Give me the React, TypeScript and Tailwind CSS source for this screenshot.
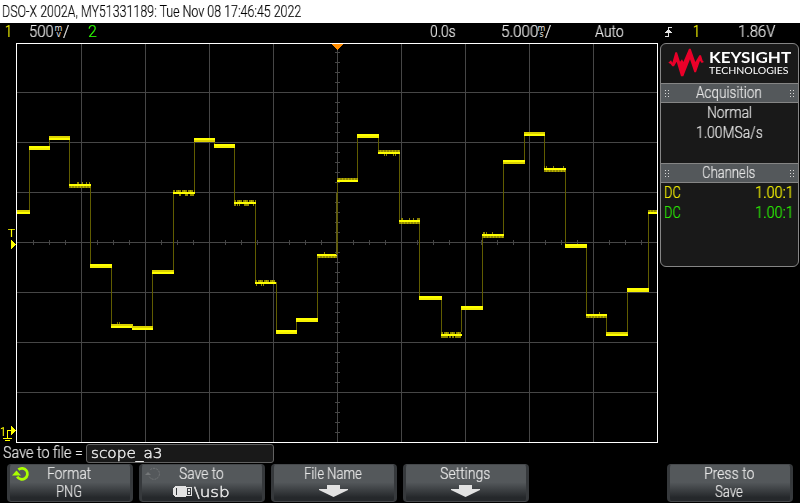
import { useLayoutEffect, useRef } from "react";
import type { ReactNode } from "react";

const SANS = "font-['Roboto','Liberation_Sans',sans-serif] font-light [-webkit-text-stroke:0.2px_currentColor]";
const WIDE = "font-['DejaVu_Sans',sans-serif] font-extralight [-webkit-text-stroke:0.45px_currentColor]";

/** Single line of text, condensed or stretched to the width of its box. */
function Fit({ className = "", face = SANS, children }: { className?: string; face?: string; children: ReactNode }) {
  const box = useRef<HTMLSpanElement>(null);
  const line = useRef<HTMLSpanElement>(null);
  useLayoutEffect(() => {
    if (box.current && line.current) {
      line.current.style.transform = `scaleX(${box.current.clientWidth / line.current.offsetWidth})`;
    }
  });
  return (
    <span ref={box} className={`block shrink-0 whitespace-nowrap ${face} ${className}`}>
      <span ref={line} className="inline-block origin-left align-top will-change-transform">{children}</span>
    </span>
  );
}

type Step = { x: number; end: number; y: number; kind: "top" | "bottom" | "full" | "up" | "down" | "both"; jitter?: number[] };

// full/top/bottom: four rows of solid trace; up/down/both: two bright rows with noise beside them
const STEPS: Step[] = [
  { x: 17, end: 30, y: 210, kind: "bottom" },
  { x: 29, end: 50, y: 146, kind: "full" },
  { x: 49, end: 70, y: 136, kind: "bottom" },
  { x: 69, end: 91, y: 184, kind: "down", jitter: [8, 9, 13, 17, 20] },
  { x: 90, end: 112, y: 264, kind: "full" },
  { x: 111, end: 133, y: 324, kind: "bottom", jitter: [6, 8] },
  { x: 132, end: 153, y: 326, kind: "bottom" },
  { x: 152, end: 174, y: 270, kind: "bottom" },
  { x: 173, end: 195, y: 192, kind: "both", jitter: [6, 7, 12, 13, 14, 17, 18, 19, 20] },
  { x: 194, end: 215, y: 138, kind: "top" },
  { x: 214, end: 235, y: 144, kind: "full" },
  { x: 234, end: 256, y: 202, kind: "both", jitter: [0, 1, 3, 5, 10, 11, 12, 13, 14, 19] },
  { x: 255, end: 276, y: 282, kind: "both", jitter: [1, 6, 8] },
  { x: 276, end: 297, y: 330, kind: "full" },
  { x: 296, end: 318, y: 318, kind: "full" },
  { x: 317, end: 337, y: 254, kind: "down", jitter: [7] },
  { x: 337, end: 358, y: 180, kind: "up" },
  { x: 357, end: 379, y: 134, kind: "full" },
  { x: 378, end: 400, y: 152, kind: "up", jitter: [6, 8, 15, 17] },
  { x: 399, end: 420, y: 220, kind: "down", jitter: [2, 3, 10, 14, 18, 19, 20] },
  { x: 419, end: 442, y: 296, kind: "full" },
  { x: 441, end: 462, y: 334, kind: "both", jitter: [0, 1, 2, 3, 4, 5, 6, 8, 9, 11, 12, 14, 15, 16, 17, 18, 19] },
  { x: 461, end: 483, y: 306, kind: "full" },
  { x: 482, end: 504, y: 234, kind: "down", jitter: [1, 2, 4, 10] },
  { x: 503, end: 525, y: 160, kind: "top" },
  { x: 524, end: 545, y: 132, kind: "bottom" },
  { x: 544, end: 566, y: 168, kind: "down", jitter: [0, 2, 9, 19] },
  { x: 565, end: 587, y: 244, kind: "full" },
  { x: 586, end: 607, y: 314, kind: "down", jitter: [13] },
  { x: 606, end: 628, y: 332, kind: "bottom" },
  { x: 627, end: 649, y: 288, kind: "full" },
  { x: 648, end: 657, y: 212, kind: "up" },
];

function Trace() {
  return (
    <g>
      {STEPS.slice(1).map((s, i) => {
        const p = STEPS[i];
        return <rect key={i} x={s.x} y={Math.min(p.y, s.y)} width={1} height={Math.abs(p.y - s.y)} fill="#605c00" />;
      })}
      {STEPS.map((s) => {
        const w = s.end - s.x;
        if (s.kind === "full" || s.kind === "top" || s.kind === "bottom") {
          return (
            <g key={s.x}>
              <rect x={s.x} y={s.y} width={w} height={4} fill={s.kind === "full" ? "#f5f000" : "#dcd200"} />
              <rect x={s.x} y={s.kind === "bottom" ? s.y + 2 : s.y} width={w} height={2} fill="#ffff00" />
              {s.jitter?.map((j) => <rect key={j} x={s.x + j} y={s.y - 2} width={1} height={2} fill="#777100" />)}
            </g>
          );
        }
        const solidAbove = s.kind !== "down";
        return (
          <g key={s.x}>
            <rect x={s.x} y={solidAbove ? s.y - 2 : s.y + 2} width={w} height={2} fill="#908900" />
            {Array.from({ length: Math.floor(w / 3) }, (_, k) => (
              <rect
                key={k}
                x={s.x + k * 3 + 2}
                y={solidAbove ? s.y - 2 : s.y + 2}
                width={1}
                height={2}
                fill={s.kind === "both" && k % 2 === 0 ? "#000" : "#b5ad00"}
              />
            ))}
            {s.jitter?.map((j) => (
              <rect key={`j${j}`} x={s.x + j} y={solidAbove ? s.y + 2 : s.y - 2} width={1} height={2} fill="#8a8300" />
            ))}
            <rect x={s.x} y={s.y} width={w} height={2} fill="#ffff00" />
          </g>
        );
      })}
    </g>
  );
}

function Plot() {
  return (
    <svg className="block h-[400px] w-[658px] shrink-0 will-change-transform" viewBox="0 43 658 400" shapeRendering="crispEdges">
      <g fill="#464646">
        {[81, 145, 209, 273, 337, 401, 465, 529, 593].map((x) => <rect key={x} x={x} y={43} width={1} height={400} />)}
        {[92, 142, 192, 242, 292, 342, 392].map((y) => <rect key={y} x={16} y={y} width={642} height={1} />)}
        {Array.from({ length: 39 }, (_, i) => <rect key={i} x={33 + i * 16} y={240} width={1} height={5} />)}
        {Array.from({ length: 39 }, (_, i) => <rect key={i} x={335} y={52 + i * 10} width={5} height={1} />)}
      </g>
      <Trace />
      <rect x={336} y={193} width={1} height={62} fill="#605c22" />
      <path d="M16 43h642v400h-642zM17 44v398h640v-398z" fill="#fff" fillRule="evenodd" />
      <path d="M332 44h11v1h-1v1h-1v1h-1v1h-1v1h-1v1h-1v-1h-1v-1h-1v-1h-1v-1h-1v-1h-1z" fill="#ff8c00" />
      <g fill="#ffff00">
        <text x={7.8} y={237} fontSize={11.5} textLength={7.5} lengthAdjust="spacingAndGlyphs" className="font-['Roboto'] font-normal">T</text>
        <path d="M11 240h1v1h1v1h1v1h1v1h1v1h-1v1h-1v1h-1v1h-1v1h-1z" />
        <text x={0} y={436} fontSize={13.5} textLength={6} lengthAdjust="spacingAndGlyphs" className="font-['Roboto'] font-normal">1</text>
        <path d="M7 430h4v-4h1v1h1v1h1v1h1v1h1v1h-1v1h-1v1h-1v1h-1v1h-1v-4h-3v7h4v1h-9v-1h4zM5 440h5v1h-5z" />
      </g>
    </svg>
  );
}

function UnitStack({ upper, lower }: { upper: string; lower: string }) {
  return (
    <span className="flex w-[7px] flex-col items-center pt-[3px] font-['DejaVu_Sans',sans-serif] text-[8px]">
      <span className="block h-[5px] leading-[5px]">{upper}</span>
      <span className="block h-[6px] leading-[7px]">{lower}</span>
    </span>
  );
}

function StatusBar() {
  return (
    <div className="flex h-5 text-[16px] leading-[18px] text-[#e8e8e8]">
      <Fit className="ml-[5px] w-[7px] text-[#ffff00]">1</Fit>
      <Fit className="ml-[17px] w-[25px]">500</Fit>
      <span className="ml-px flex"><UnitStack upper="m" lower="v" /></span>
      <Fit className="ml-px w-[6px]">/</Fit>
      <Fit className="ml-[19px] w-[9px] text-[#2dff00]">2</Fit>
      <Fit className="ml-[333px] w-[26px]">0.0s</Fit>
      <Fit className="ml-[45px] w-[37px]">5.000</Fit>
      <UnitStack upper="m" lower="s" />
      <Fit className="w-[6px]">/</Fit>
      <Fit className="ml-[44px] w-[29px]">Auto</Fit>
      <svg className="mt-[3px] ml-[40px] h-[12px] w-[9px] shrink-0" viewBox="0 0 9 12" shapeRendering="crispEdges" fill="#e2e2e2">
        <path d="M4 1h4v1h-3v2h1v1h1v1h1v1h-3v4h-4v-1h3v-3h-3v-1h1v-1h1v-1h1z" />
      </svg>
      <Fit className="ml-[20px] w-[7px] text-[#ffff00]">1</Fit>
      <Fit className="ml-[38px] w-[37px]">1.86V</Fit>
    </div>
  );
}

function Grip() {
  return (
    <span className="grid grid-cols-[1px_1px] gap-x-[2px] gap-y-[2px]">
      {[0, 1, 2, 3, 4, 5].map((i) => <span key={i} className="size-px bg-[#d8d8d8]" />)}
    </span>
  );
}

function SectionTitle({ children }: { children: ReactNode }) {
  return (
    <div className="flex h-[20px] items-center justify-between border-y border-[#858585] bg-[#54585b] px-[4px] leading-[18px]">
      <Grip />
      {children}
      <Grip />
    </div>
  );
}

function SidePanel() {
  return (
    <aside className="ml-[2px] h-[224px] w-[139px] shrink-0 overflow-hidden rounded-[6px] border border-[#858585] bg-[#191919] text-[16px] leading-5 text-[#e8e8e8]">
      <div className="flex h-[39px] pl-[7px]">
        <svg className="mt-[4px] h-[30px] w-[37px] shrink-0" viewBox="564 85 111 90" fill="#e90029">
          <path d="M565 129L573 122L577 129L586 98H591L600 126L606 119L610 127L627 87H632L646 127L658 107H663L668 123L672 127L665 130L660 123L648 158H643L630 119L610 170H603L590 126L582 140H577L572 133Z" />
        </svg>
        <div className="ml-[4px] flex flex-col">
          <Fit face="font-['Lato','Open_Sans',sans-serif] font-bold" className="mt-[3px] h-[17px] w-[82px] text-[16px] leading-[19px] text-white">KEYSIGHT</Fit>
          <Fit face="font-['Lato','Open_Sans',sans-serif] font-normal" className="h-[12px] w-[80px] text-[10px] leading-[12px] text-white">TECHNOLOGIES</Fit>
        </div>
      </div>
      <SectionTitle><Fit className="mr-[2px] w-[66px]">Acquisition</Fit></SectionTitle>
      <div className="flex h-[60px] flex-col items-center pr-px leading-[20px]">
        <Fit className="h-5 w-[45px]">Normal</Fit>
        <Fit className="h-5 w-[67px]">1.00MSa/s</Fit>
      </div>
      <SectionTitle><Fit className="mr-[2px] w-[53px]">Channels</Fit></SectionTitle>
      <div className="flex h-5 justify-between pr-[4px] pl-[3px] leading-[20px] text-[#ffff00]">
        <Fit className="w-[17px]">DC</Fit>
        <Fit className="w-[39px]">1.00:1</Fit>
      </div>
      <div className="flex h-5 justify-between pr-[4px] pl-[3px] leading-[20px] text-[#2dff00]">
        <Fit className="w-[17px]">DC</Fit>
        <Fit className="w-[39px]">1.00:1</Fit>
      </div>
    </aside>
  );
}

function SoftKey({ top, bottom, icon }: { top: ReactNode; bottom: ReactNode; icon?: ReactNode }) {
  return (
    <div className="relative flex h-[38px] w-[126px] shrink-0 flex-col items-center rounded-[4px] border-x-[3px] border-y border-x-[#36393c] border-y-[#45484b] bg-[linear-gradient(to_bottom,#54585b_0%,#54585b_48%,#25282b_90%)] pr-[2px] text-[16px] leading-[18px] text-[#e8e8e8]">
      {icon}
      <div className="flex h-[19px] justify-center">{top}</div>
      <div className="flex h-[18px] justify-center">{bottom}</div>
    </div>
  );
}

function Cycle({ dim = false }: { dim?: boolean }) {
  return (
    <svg className="absolute top-px left-[2px] h-[16px] w-[18px]" viewBox="0 0 18 16">
      <path
        d="M6.4 3.6A5.5 5.5 0 1 1 5.2 10.6"
        fill="none"
        stroke={dim ? "#747779" : "#aaff00"}
        strokeWidth={dim ? 1 : 2.8}
        strokeDasharray={dim ? "2 1" : undefined}
      />
      <path d={dim ? "M1 9L4 6L7 9Z" : "M0 9.6L4.5 4.5L9 9.6Z"} fill={dim ? "#747779" : "#aaff00"} />
    </svg>
  );
}

function DownArrow() {
  return (
    <svg className="mt-[2px] h-[12px] w-[29px]" viewBox="0 0 29 12" fill="#e2e2e2">
      <path d="M8 0H21V4H29V5L14.5 12L0 5V4H8Z" />
    </svg>
  );
}

function UsbStick() {
  return (
    <svg className="mt-[3px] h-[11px] w-[20px]" viewBox="0 0 20 11" shapeRendering="crispEdges">
      <path d="M2 0h11v11h-11v-1h-1v-1h-1v-7h1v-1h1z" fill="#e2e2e2" />
      <path d="M3 2h1v7h-1z" fill="#34373a" />
      <path d="M13 1h6v9h-6zM14 2v7h4v-7z" fill="#e2e2e2" fillRule="evenodd" />
      <path d="M15 3h2v2h-2zM15 6h2v2h-2z" fill="#e2e2e2" />
    </svg>
  );
}

export default function App() {
  return (
    <div className="flex h-[503px] w-[800px] flex-col overflow-hidden bg-black">
      <header className="flex h-[23px] shrink-0 bg-white pl-[2px] text-[17px] leading-[23px] text-black">
        <Fit className="w-[299px]">DSO-X 2002A, MY51331189: Tue Nov 08 17:46:45 2022</Fit>
      </header>
      <StatusBar />
      <main className="flex h-[400px] shrink-0">
        <Plot />
        <SidePanel />
      </main>
      <div className="flex h-[21px] shrink-0 pt-px text-[16px] leading-[18px] text-[#e8e8e8]">
        <Fit className="ml-[3px] w-[80px]">Save to file =</Fit>
        <div className="ml-[3px] h-[19px] w-[188px] rounded-[3px] border border-[#626262] bg-[#191919] pl-[4px]">
          <Fit face={WIDE} className="w-[72px] text-[14px] leading-[17px]">scope_a3</Fit>
        </div>
      </div>
      <footer className="flex gap-[6px] pl-[7px]">
        <SoftKey icon={<Cycle />} top={<Fit className="w-[44px]">Format</Fit>} bottom={<Fit className="w-[26px]">PNG</Fit>} />
        <SoftKey
          icon={<Cycle dim />}
          top={<Fit className="w-[45px]">Save to</Fit>}
          bottom={
            <>
              <UsbStick />
              <Fit face={WIDE} className="ml-px w-[36px] text-[14px]">\usb</Fit>
            </>
          }
        />
        <SoftKey top={<Fit className="w-[58px]">File Name</Fit>} bottom={<DownArrow />} />
        <SoftKey top={<Fit className="w-[50px]">Settings</Fit>} bottom={<DownArrow />} />
        <div className="w-[126px] shrink-0" />
        <SoftKey top={<Fit className="w-[50px]">Press to</Fit>} bottom={<Fit className="w-[28px]">Save</Fit>} />
      </footer>
    </div>
  );
}
